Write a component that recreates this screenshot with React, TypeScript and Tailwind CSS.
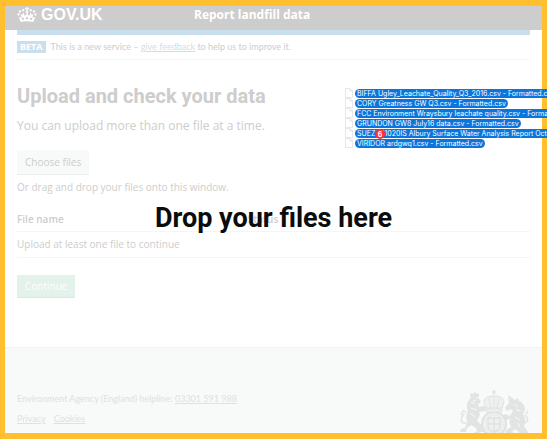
import type { ReactNode } from 'react';

const draggedFiles = [
  'BIFFA Ugley_Leachate_Quality_Q3_2016.csv - Formatted.csv',
  'CORY Greatness GW Q3.csv - Formatted.csv',
  'FCC Environment Wraysbury leachate quality.csv - Formatted.csv',
  'GRUNDON GW8 July16 data.csv - Formatted.csv',
  'SUEZ 161020IS Albury Surface Water Analysis Report October.csv',
  'VIRIDOR ardgwq1.csv - Formatted.csv',
];

function Crown() {
  return (
    <svg viewBox="0 0 40 32" className="h-4 w-5 fill-white" aria-hidden="true">
      <path d="M18.500 0h3l-.5 2.500 3-.5v3l-3-.5.5 3.500h-3l.5-3.500-3 .5v-3l3 .5z" />
      <circle cx="20" cy="10.500" r="2.500" />
      <circle cx="12.500" cy="6.500" r="2.300" />
      <circle cx="27.500" cy="6.500" r="2.300" />
      <circle cx="6" cy="9" r="2.300" />
      <circle cx="34" cy="9" r="2.300" />
      <circle cx="3" cy="15" r="2.300" />
      <circle cx="37" cy="15" r="2.300" />
      <path d="M7.500 30 3 19c2.500 2.500 5 2.500 5.500 0L7 13.500c2.500 3 5 2.500 5-1.500h2c0 4 1 5.500 3.500 5l1-3h3l1 3c2.500.5 3.500-1 3.500-5h2c0 4 2.500 4.500 5 1.500L31.500 19c.5 2.500 3 2.500 5.500 0l-4.500 11c-8-2-17-2-25 0z" />
      <path d="M10.500 26 8.500 20.500l5 1.500 1 3.200zM25.500 25.200l1-3.200 5-1.500-2 5.500zM16.500 24.500l3.500-6 3.500 6z" className="fill-[#cdcdcd]" />
    </svg>
  );
}

function Crest() {
  return (
    <svg viewBox="0 0 72 50" className="h-[50px] w-[72px] fill-[#e2e4e4]" aria-hidden="true">
      {/* Lion */}
      <path d="M12 7l1-3 2 1 2-2 2 2 2-1 0 4-7 1zM12 9c3-1 7-1 9 1 2 1 2 3 1 4l-2 1 1 3 5-1 2 2-1 3-6 1 1 3-3 5 3 4 3 1 1 7h-7l-1-4-5-3-4 3-1 4H2l1-3 4-1 2-6c-1-4-1-8 1-11-2-4-1-9 2-12z" />
      <path d="M8 34c-4 1-6-3-4-6l2-3M3 26l2-4 3 1" className="fill-none stroke-[#e2e4e4]" strokeWidth="1.500" />
      {/* Unicorn */}
      <path d="M50 6l7 5 3-2 1 3c4 1 6 5 6 9l-2 4c3 4 3 8 1 12l4 6v4h-8l-1-4-4-3-4 4-2 3h-4l1-6 5-3-2-5 2-3-6 1-2-4 2-2 5 2 3-5-2-2-4 2-2-3 4-5z" />
      <path d="M65 34c4 0 6-3 4-6l-2-2M68 25l2-3" className="fill-none stroke-[#e2e4e4]" strokeWidth="1.500" />
      {/* Shield */}
      <circle cx="36" cy="35" r="12" className="fill-[#eff1f1] stroke-[#dfe2e2]" strokeWidth="2" />
      <circle cx="36" cy="35" r="9" className="fill-none stroke-[#e2e4e4]" strokeWidth="1" strokeDasharray="1 1" />
      <path d="M30 29h12v8c0 3-3 5-6 6-3-1-6-3-6-6zM36 29v14M30 35h12" className="fill-none stroke-[#dfe2e2]" strokeWidth="1.500" />
      <path d="M12 46l8-4 6 6H10zM60 46l-8-4-6 6h16z" />
      {/* Crown */}
      <path d="M36 1v5M34 3h4" className="stroke-[#e2e4e4]" strokeWidth="1.500" />
      <path d="M28 19l-2-6c0-4 4-6 10-6s10 2 10 6l-2 6zM28 20h16v3H28z" className="fill-[#eff1f1] stroke-[#dfe2e2]" />
      <path d="M36 7v12M31 9l2 10M41 9l-2 10" className="stroke-[#dfe2e2]" />
      <path d="M13 13l4 2M13 19l6 2M12 24l5 4M15 12l3-1M56 15l4 3M58 21l5 1M57 28l5 3M60 34l2 4" className="stroke-[#f8f9f9]" />
    </svg>
  );
}

function PageIcon() {
  return (
    <svg viewBox="0 0 8 10" className="h-[10px] w-2 fill-white stroke-[#dcdcdc]" strokeWidth="0.7" aria-hidden="true">
      <path d="M.5.5H5L7.500 3v6.500h-7zM5 .5V3h2.500" />
    </svg>
  );
}

function FooterLink({ href, children }: { href: string; children: ReactNode }) {
  return (
    <a href={href} className="underline">
      {children}
    </a>
  );
}

export default function App() {
  return (
    <div className="relative flex min-h-screen flex-col overflow-hidden bg-white font-['Open_Sans',sans-serif] text-[10px] leading-4 text-[#cdcdcd]">
      {/* Header */}
      <header className="grid h-[30px] grid-cols-[177px_1fr] items-center bg-[#cdcdcd] px-[17px] font-bold text-white">
        <a href="#home" className="flex items-center gap-1 font-['Liberation_Sans',sans-serif] text-[16px]">
          <Crown />
          GOV.UK
        </a>
        <a href="#service" className="text-[12px]">Report landfill data</a>
      </header>

      {/* Page content */}
      <main className="mx-[17px] flex-1 border-t-[5px] border-[#c9dfee]">
        <div className="flex h-[25px] items-center gap-[5px] border-b border-[#f5f5f5] text-[9px]">
          <strong className="bg-[#c9dfee] px-[3px] leading-3 text-white">BETA</strong>
          <p className="font-['Lato',sans-serif]">
            This is a new service – <a href="#feedback" className="text-[#c9dfee] underline">give feedback</a> to help us to improve it.
          </p>
        </div>

        <h1 className="mt-6 font-['Roboto',sans-serif] text-[20px] leading-6 font-bold">Upload and check your data</h1>
        <p className="mt-2 text-[12px] leading-5">You can upload more than one file at a time.</p>
        <button type="button" className="mt-[14px] block h-[25px] border-b border-[#eceeee] bg-[#f8f9f9] px-2">
          Choose files
        </button>
        <p className="mt-1">Or drag and drop your files onto this window.</p>

        <table className="mt-3 w-full text-left">
          <thead>
            <tr className="h-6 border-b border-[#f5f5f5]">
              <th className="w-[45%] font-semibold">File name</th>
              <th className="font-semibold">Status</th>
            </tr>
          </thead>
          <tbody>
            <tr className="h-[26px] border-b border-[#f5f5f5]">
              <td colSpan={2}>Upload at least one file to continue</td>
            </tr>
          </tbody>
        </table>

        <button type="button" className="mt-[17px] mb-10 block h-[23px] border-b border-[#d9e8e0] bg-[#e3f2ea] px-2 text-white">
          Continue
        </button>
      </main>

      {/* Footer */}
      <footer className="flex h-[92px] items-end justify-between border-t border-[#f1f2f2] bg-[#f8f9f9] px-[17px] font-['Lato',sans-serif] text-[9px] text-[#dfe1e1]">
        <div className="flex flex-col gap-1 pb-3">
          <p>
            Environment Agency (England) helpline: <FooterLink href="tel:03301591988">03301 591 988</FooterLink>
          </p>
          <nav className="flex gap-2">
            <FooterLink href="#privacy">Privacy</FooterLink>
            <FooterLink href="#cookies">Cookies</FooterLink>
          </nav>
        </div>
        <Crest />
      </footer>

      {/* Drop target */}
      <div className="absolute inset-0 flex items-center justify-center border-x-[5px] border-y-[6px] border-[#ffbf2e] pb-1">
        <p className="font-['Roboto',sans-serif] text-[27px] leading-8 font-bold text-[#0b0c0c]">Drop your files here</p>
      </div>

      {/* Files under the cursor */}
      <div className="absolute top-[88px] left-[345px] font-['Inter',sans-serif] text-[7px] leading-[9px] whitespace-nowrap text-white">
        <ul>
          {draggedFiles.map((name) => (
            <li key={name} className="flex h-[10px] items-center gap-[2px]">
              <PageIcon />
              <span className="rounded-full bg-[#0a75dc] px-[2px]">{name}</span>
            </li>
          ))}
        </ul>
        <span className="absolute top-[41px] left-[30px] flex size-[10px] items-center justify-center rounded-full bg-[#fc3035] font-bold">6</span>
      </div>
    </div>
  );
}
